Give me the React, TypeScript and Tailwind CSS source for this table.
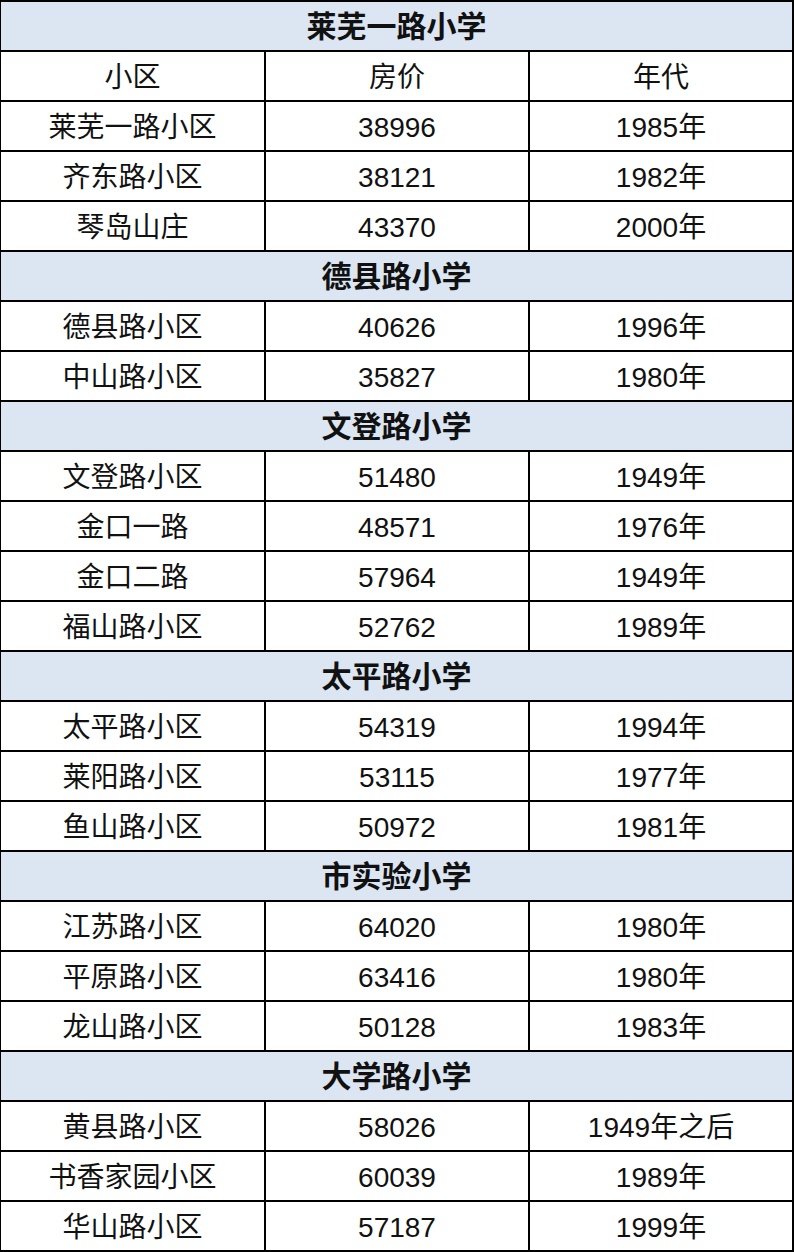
import React from "react";

type Row = { type: "h"; title: string } | { type: "r"; cells: [string, string, string] };

const rows: Row[] = [
  { type: "h", title: "莱芜一路小学" },
  { type: "r", cells: ["小区", "房价", "年代"] },
  { type: "r", cells: ["莱芜一路小区", "38996", "1985年"] },
  { type: "r", cells: ["齐东路小区", "38121", "1982年"] },
  { type: "r", cells: ["琴岛山庄", "43370", "2000年"] },
  { type: "h", title: "德县路小学" },
  { type: "r", cells: ["德县路小区", "40626", "1996年"] },
  { type: "r", cells: ["中山路小区", "35827", "1980年"] },
  { type: "h", title: "文登路小学" },
  { type: "r", cells: ["文登路小区", "51480", "1949年"] },
  { type: "r", cells: ["金口一路", "48571", "1976年"] },
  { type: "r", cells: ["金口二路", "57964", "1949年"] },
  { type: "r", cells: ["福山路小区", "52762", "1989年"] },
  { type: "h", title: "太平路小学" },
  { type: "r", cells: ["太平路小区", "54319", "1994年"] },
  { type: "r", cells: ["莱阳路小区", "53115", "1977年"] },
  { type: "r", cells: ["鱼山路小区", "50972", "1981年"] },
  { type: "h", title: "市实验小学" },
  { type: "r", cells: ["江苏路小区", "64020", "1980年"] },
  { type: "r", cells: ["平原路小区", "63416", "1980年"] },
  { type: "r", cells: ["龙山路小区", "50128", "1983年"] },
  { type: "h", title: "大学路小学" },
  { type: "r", cells: ["黄县路小区", "58026", "1949年之后"] },
  { type: "r", cells: ["书香家园小区", "60039", "1989年"] },
  { type: "r", cells: ["华山路小区", "57187", "1999年"] },
];

export default function App() {
  return (
    <div
      className="w-[794px] h-[1252px] bg-white text-[#111] border-t-2 border-l border-r-2 border-black flex flex-col"
      style={{ fontFamily: '"Liberation Sans", "Noto Sans CJK SC", sans-serif' }}
    >
      {rows.map((row, i) =>
        row.type === "h" ? (
          <div
            key={i}
            className="h-[50px] shrink-0 border-b-2 border-black bg-[#dce6f2] flex items-center justify-center pt-[2px] text-[30px] font-bold leading-none"
          >
            {row.title}
          </div>
        ) : (
          <div key={i} className="h-[50px] shrink-0 border-b-2 border-black flex text-[28px] leading-none pt-[3px]">
            <div className="w-[265px] border-r-2 border-black -mt-[3px] pt-[3px] flex items-center justify-center">{row.cells[0]}</div>
            <div className="w-[264px] border-r-2 border-black -mt-[3px] pt-[3px] flex items-center justify-center">{row.cells[1]}</div>
            <div className="flex-1 -mt-[3px] pt-[3px] flex items-center justify-center">{row.cells[2]}</div>
          </div>
        )
      )}
    </div>
  );
}
